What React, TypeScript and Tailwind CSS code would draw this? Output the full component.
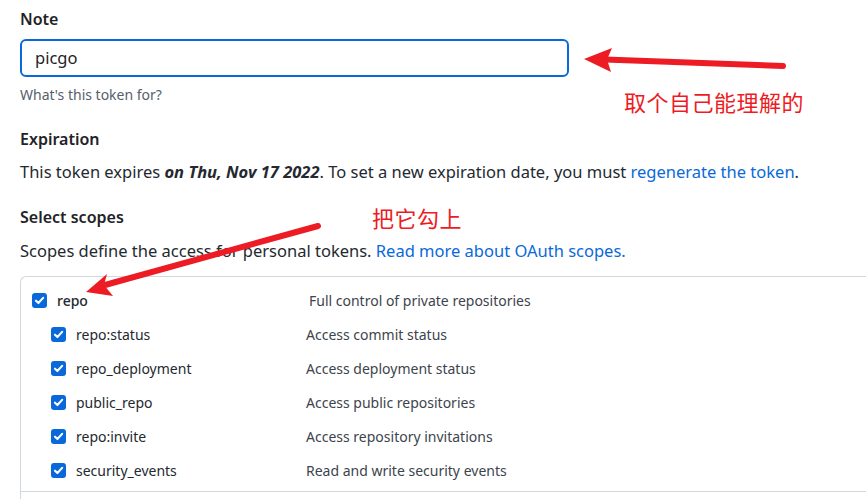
import React from 'react';

// scope rows shown in the token form
const scopes = [
  { name: 'repo:status', desc: 'Access commit status' },
  { name: 'repo_deployment', desc: 'Access deployment status' },
  { name: 'public_repo', desc: 'Access public repositories' },
  { name: 'repo:invite', desc: 'Access repository invitations' },
  { name: 'security_events', desc: 'Read and write security events' },
];

function Check() {
  return (
    <span className="flex h-[15px] w-[15px] shrink-0 items-center justify-center rounded-[3px] bg-[#0969da]">
      <svg width="11" height="11" viewBox="0 0 10 10" fill="none">
        <path d="M1.8 5.2 L4 7.3 L8.3 2.6" stroke="white" strokeWidth="1.9" strokeLinecap="round" strokeLinejoin="round" />
      </svg>
    </span>
  );
}

export default function App() {
  return (
    <div
      className="relative h-[499px] w-[866px] overflow-hidden bg-white px-5 pt-[7px] text-[#1f2328]"
      style={{ fontFamily: '"Noto Sans", "Noto Sans CJK SC", sans-serif' }}
    >
      <label className="block text-[16px] font-semibold leading-6">Note</label>
      <div className="mt-2 flex h-[38px] w-[549px] items-center rounded-md border-2 border-[#0969da] px-[13px] text-[16.5px]">
        picgo
      </div>
      <p className="mt-2 text-[14px] leading-5 text-[#57606a]">What's this token for?</p>

      <h3 className="mt-[22px] text-[16px] font-semibold leading-6">Expiration</h3>
      <p className="mt-[9px] text-[16.5px] leading-6 text-[#24292f]">
        This token expires <em className="font-bold">on Thu, Nov 17 2022</em>. To set a new expiration date, you must{' '}
        <a className="text-[#0969da]">regenerate the token</a>.
      </p>

      <h3 className="mt-[21px] text-[16px] font-semibold leading-6">Select scopes</h3>
      <p className="mt-[10px] text-[16.5px] leading-6 text-[#24292f]">
        Scopes define the access for personal tokens. <a className="text-[#0969da]">Read more about OAuth scopes.</a>
      </p>

      <div className="mt-[13px] w-[1000px] rounded-tl-md border-l border-t border-[#d0d7de] pb-10">
        <div className="border-b border-[#d0d7de] pb-[4px] pt-[6px] text-[14px] text-[#24292f]">
          <div className="flex h-[34px] items-center">
            <div className="flex w-[288px] items-center gap-[10px] pl-[11px]">
              <Check />
              <span className="font-medium">repo</span>
            </div>
            <span className="pt-[1px] text-[#3d444d]">Full control of private repositories</span>
          </div>
          {scopes.map((s) => (
            <div key={s.name} className="flex h-[34px] items-center">
              <div className="flex w-[285px] items-center gap-[10px] pl-[30px]">
                <Check />
                <span>{s.name}</span>
              </div>
              <span className="pt-[1px] text-[#3d444d]">{s.desc}</span>
            </div>
          ))}
        </div>
      </div>

      {/* red annotations drawn over the screenshot */}
      <svg className="pointer-events-none absolute left-0 top-0" width="866" height="499">
        <line x1="783" y1="66" x2="605" y2="59.5" stroke="#ed1c24" strokeWidth="6" strokeLinecap="round" />
        <polygon points="584,59 612,48 607,59.5 611,72" fill="#ed1c24" />
        <line x1="318" y1="226" x2="105" y2="285" stroke="#ed1c24" strokeWidth="6" strokeLinecap="round" />
        <polygon points="86,292 107,274 104,285 113,296" fill="#ed1c24" />
      </svg>
      <span className="absolute left-[624px] top-[88px] text-[22px] leading-7 tracking-[0.5px] text-[#ed1c24]">
        取个自己能理解的
      </span>
      <span className="absolute left-[372px] top-[204px] text-[22px] leading-7 tracking-[0.5px] text-[#ed1c24]">
        把它勾上
      </span>
    </div>
  );
}
